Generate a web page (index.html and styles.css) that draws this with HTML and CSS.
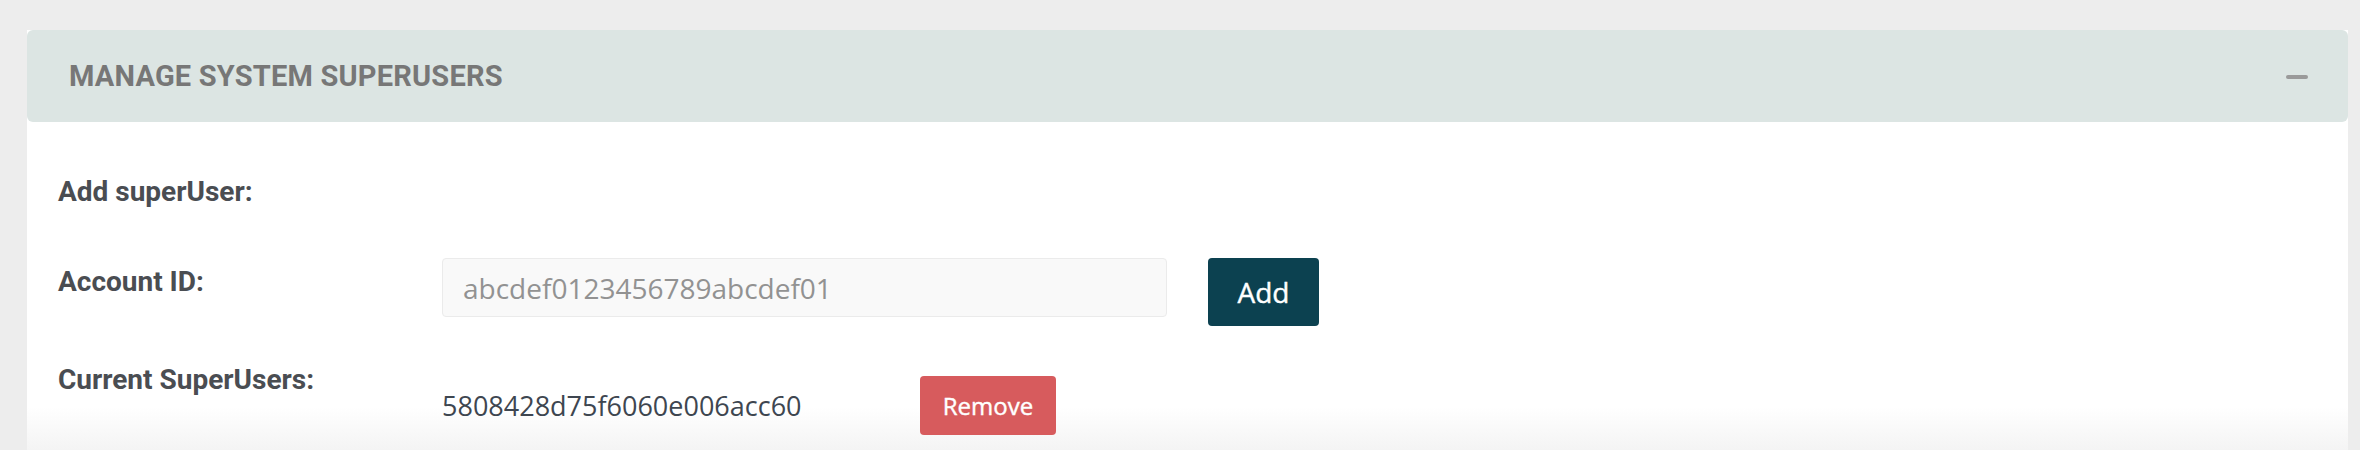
FILE: index.html
```html
<!DOCTYPE html>
<html lang="en">
<head>
<meta charset="utf-8">
<title>Manage System Superusers</title>
<link rel="stylesheet" href="styles.css">
</head>
<body>
  <section class="panel">
    <header class="panel-header">
      <h2 class="panel-title">MANAGE SYSTEM SUPERUSERS</h2>
      <span class="collapse-icon" aria-label="Collapse"></span>
    </header>
    <div class="panel-body">
      <div class="row row-first">
        <div class="label">Add superUser:</div>
      </div>
      <div class="row row-account">
        <div class="label label-offset">Account ID:</div>
        <input class="text-input" type="text" placeholder="abcdef0123456789abcdef01">
        <button class="btn btn-add">Add</button>
      </div>
      <div class="row row-current">
        <div class="label">Current SuperUsers:</div>
        <div class="user-list">
          <div class="user-item">
            <span class="user-id">5808428d75f6060e006acc60</span>
            <button class="btn btn-remove">Remove</button>
          </div>
        </div>
      </div>
    </div>
  </section>
</body>
</html>
```

FILE: styles.css
```css
html, body {
  margin: 0;
  padding: 0;
}

body {
  background: #ededed;
  font-family: "Open Sans", "Liberation Sans", sans-serif;
  overflow: hidden;
}

.panel {
  margin: 30px 12px 0 27px;
  background: #ffffff;
}

.panel-header {
  height: 92px;
  box-sizing: border-box;
  padding: 0 40px 0 42px;
  background: #dce5e3;
  border-radius: 6px;
  display: flex;
  align-items: center;
  justify-content: space-between;
}

.panel-title {
  margin: 0;
  font-family: Roboto, "Liberation Sans", sans-serif;
  font-weight: 700;
  font-size: 29px;
  line-height: 40px;
  color: #777777;
  letter-spacing: 0.2px;
}

.collapse-icon {
  display: block;
  width: 22px;
  height: 4px;
  border-radius: 2px;
  background: #9a9a9a;
  margin-top: 1px;
}

.panel-body {
  height: 328px;
  box-sizing: border-box;
  padding: 50px 31px 0 31px;
  background: linear-gradient(to bottom, #ffffff 0, #ffffff 285px, #f4f4f4 100%);
}

.row {
  display: flex;
  align-items: flex-start;
}

.row-account {
  margin-top: 46px;
}

.row-current {
  margin-top: 34px;
}

.label {
  width: 384px;
  flex: none;
  font-family: Roboto, "Liberation Sans", sans-serif;
  font-weight: 700;
  font-size: 28px;
  line-height: 40px;
  color: #4a4d52;
}

.label-offset {
  padding-top: 4px;
}

.text-input {
  width: 725px;
  height: 59px;
  box-sizing: border-box;
  margin: 0 41px 0 0;
  padding: 0 20px;
  border: 1px solid #ebebeb;
  border-radius: 4px;
  background: #f9f9f9;
  font-family: "Open Sans", "Liberation Sans", sans-serif;
  font-size: 28px;
  color: #555;
  outline: none;
}

.text-input::placeholder {
  color: #929292;
  opacity: 1;
}

.btn {
  border: none;
  margin: 0;
  font-family: "Open Sans", "Liberation Sans", sans-serif;
  font-weight: 400;
  color: #ffffff;
  -webkit-text-stroke: 0.4px #ffffff;
  cursor: pointer;
}

.btn-add {
  width: 111px;
  height: 68px;
  padding: 0;
  border-radius: 4px;
  background: #0c4150;
  font-size: 28px;
}

.user-list {
  padding-top: 16px;
}

.user-item {
  display: flex;
  align-items: center;
}

.user-id {
  width: 478px;
  font-size: 27px;
  color: #3e4650;
}

.btn-remove {
  width: 136px;
  height: 59px;
  padding: 0;
  border-radius: 4px;
  background: #d75b5d;
  font-size: 24px;
}
```
